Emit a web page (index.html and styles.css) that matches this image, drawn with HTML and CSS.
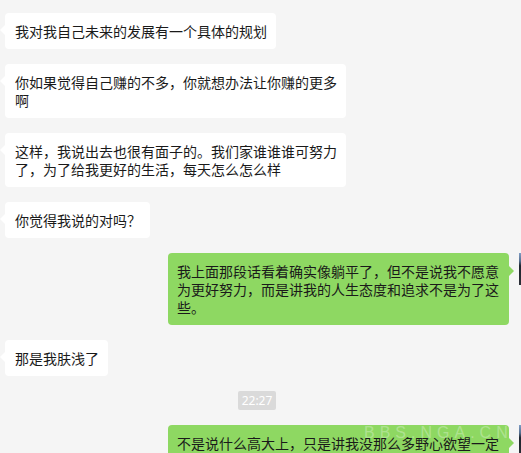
FILE: index.html
```html
<!DOCTYPE html>
<html lang="zh-CN">
<head>
<meta charset="utf-8">
<title>聊天记录</title>
<link rel="stylesheet" href="styles.css">
</head>
<body>
<div class="chat">
  <div class="row in"><div class="bubble">我对我自己未来的发展有一个具体的规划</div></div>
  <div class="row in"><div class="bubble">你如果觉得自己赚的不多，你就想办法让你赚的更多啊</div></div>
  <div class="row in"><div class="bubble">这样，我说出去也很有面子的。我们家谁谁谁可努力了，为了给我更好的生活，每天怎么怎么样</div></div>
  <div class="row in"><div class="bubble">你觉得我说的对吗？</div></div>
  <div class="row out"><div class="bubble">我上面那段话看着确实像躺平了，但不是说我不愿意为更好努力，而是讲我的人生态度和追求不是为了这些。</div><div class="avatar"></div></div>
  <div class="row in"><div class="bubble">那是我肤浅了</div></div>
  <div class="time"><span>22:27</span></div>
  <div class="row out"><div class="bubble">不是说什么高大上，只是讲我没那么多野心欲望一定要怎么样</div><div class="avatar"></div></div>
</div>
<div class="watermark">BBS.NGA.CN</div>
</body>
</html>
```

FILE: styles.css
```css
html, body {
  margin: 0;
  padding: 0;
  background: #f5f5f5;
  width: 521px;
  height: 453px;
  overflow: hidden;
  position: relative;
  font-family: "Microsoft YaHei", "Noto Sans CJK SC", "Noto Sans", sans-serif;
  color: #1a1a1a;
}

.chat {
  display: flex;
  flex-direction: column;
  gap: 15px;
  padding: 13px 12px 0 5px;
}

.row {
  display: flex;
  align-items: flex-start;
}

.row.out {
  justify-content: flex-end;
  gap: 10px;
  margin-right: -42px;
}

.bubble {
  position: relative;
  max-width: 322px;
  padding: 9px 9px 9px 10px;
  font-size: 14px;
  line-height: 18px;
  border-radius: 4px;
  word-break: break-all;
}

.in .bubble {
  background: #ffffff;
}

.out .bubble {
  background: #8ed862;
  padding-left: 9px;
  padding-right: 10px;
}

.in .bubble::before {
  content: "";
  position: absolute;
  left: -5px;
  top: 12px;
  border-top: 5px solid transparent;
  border-bottom: 5px solid transparent;
  border-right: 5px solid #ffffff;
}

.out .bubble::after {
  content: "";
  position: absolute;
  right: -5px;
  top: 13px;
  border-top: 5px solid transparent;
  border-bottom: 5px solid transparent;
  border-left: 5px solid #8ed862;
}

.avatar {
  width: 32px;
  height: 32px;
  flex: none;
  background: linear-gradient(180deg, #7f9cc4 0%, #56708f 25%, #1f2630 40%, #2b2f36 100%);
}

.time {
  display: flex;
  justify-content: center;
}

.time span {
  background: #dadada;
  color: #ffffff;
  font-family: "Microsoft YaHei", "Noto Sans", sans-serif;
  font-size: 12px;
  line-height: 19px;
  padding: 0 4px;
  border-radius: 2px;
}

.watermark {
  position: absolute;
  left: 364px;
  top: 425px;
  font-family: "Liberation Sans", sans-serif;
  font-size: 16px;
  line-height: 16px;
  letter-spacing: 5px;
  color: rgba(255, 255, 255, 0.3);
}
```
